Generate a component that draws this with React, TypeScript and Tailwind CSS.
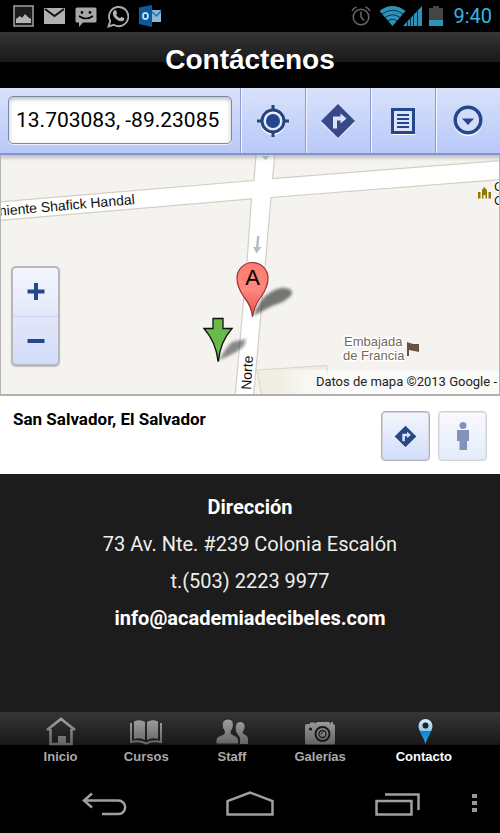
import type { ReactNode } from "react";

const roboto = "font-[Roboto,sans-serif]";
const helvetica = "font-['Liberation_Sans',Arial,sans-serif]";

function StatusBar() {
  return (
    <header className={`flex h-8 items-center justify-between bg-black pl-[13px] pr-2 ${roboto}`}>
      <div className="flex items-center gap-[10px]">
        <svg width="21" height="22" viewBox="0 0 21 22">
          <rect x="1" y="1" width="19" height="20" fill="#1c1c1c" stroke="#989898" strokeWidth="1.6" />
          <path d="M3 18v-4l4-3 2 2 3-4 3 3 3 2v4z" fill="#b4b4b4" />
        </svg>
        <svg width="21" height="22" viewBox="0 0 21 22">
          <rect y="3" width="21" height="16" fill="#b0b0b0" />
          <path d="M1 4l9.500 7L20 4" fill="none" stroke="#111" strokeWidth="2" />
        </svg>
        <svg width="22" height="22" viewBox="0 0 22 22">
          <path d="M2 2.500h18q1.500 0 1.500 1.500v12q0 1.500-1.500 1.500H8L4 22v-4.500H2Q.500 17.500.500 16V4Q.500 2.500 2 2.500z" fill="#a8a8a8" />
          <circle cx="7" cy="7.500" r="1.400" fill="#000" />
          <circle cx="15" cy="7.500" r="1.400" fill="#000" />
          <path d="M4 11q7 5 14 0" fill="none" stroke="#000" strokeWidth="1.600" />
        </svg>
        <svg width="22" height="24" viewBox="0 0 22 24">
          <path d="M1.500 22.500l1.700-5.500a9.600 9.600 0 1 1 3.600 3.800z" fill="none" stroke="#aaa" strokeWidth="1.900" />
          <path d="M7.200 6.500q1-.900 1.800 0l1.200 2.600-1.100 1.600q1.400 2.600 4 3.600l1.400-1.600 2.800 1.500q.300 2.600-2.800 3c-4.500 0-8.900-4.600-8.700-8.200q.200-1.600 1.400-2.500z" fill="#b4b4b4" />
        </svg>
        <svg width="23" height="22" viewBox="0 0 23 22">
          <rect x="11" y="5" width="11" height="12" fill="#8fb6d4" />
          <path d="M12 6l5.500 5L22 6" fill="none" stroke="#1671b4" strokeWidth="1.300" />
          <path d="M0 2.500L13 0v22L0 19z" fill="#0a5a9e" />
          <ellipse cx="6.500" cy="11" rx="2.500" ry="3.200" fill="none" stroke="#c6dcec" strokeWidth="1.800" />
        </svg>
      </div>
      <div className="flex items-center">
        <svg width="20" height="20" viewBox="0 0 20 20" fill="none" stroke="#686868" strokeWidth="1.500">
          <circle cx="10" cy="11" r="7.800" />
          <path d="M10 5.500V11l3 3.500M1 5Q2.500 2 5.500 1M14.500 1Q17.500 2 19 5" />
        </svg>
        <svg className="ml-2" width="44" height="22" viewBox="0 0 44 22">
          <path d="M0.500 6Q13.500-4 26.500 6L13.500 21z" fill="#2e93ba" />
          <g fill="none" stroke="#041620" strokeWidth=".8">
            <path d="M3 9Q13.500 1.500 24 9" />
            <path d="M6 12.500Q13.500 7 21 12.500" />
            <path d="M9 16Q13.500 12.500 18 16" />
          </g>
          <path d="M24 21L43 1V21z" fill="#2e93ba" />
          <path d="M28.500 17V21M31.500 13V21M34.500 10V21M38.500 6V21" stroke="#0b2a37" strokeWidth="1" />
        </svg>
        <svg className="ml-[6px]" width="14" height="22" viewBox="0 0 14 22">
          <path d="M4 1h6v2h4v18H0V3h4z" fill="#454545" />
          <path d="M0 15h14v6H0z" fill="#2e93ba" />
        </svg>
        <time className="ml-[10px] text-[20px] leading-6 text-[#33b5e5]">9:40</time>
      </div>
    </header>
  );
}

function TurnSign({ size, color }: { size: number; color: string }) {
  return (
    <svg width={size} height={size} viewBox="0 0 36 36">
      <path d="M18 2.500L35 19.500 18 36 1 19.500z" fill="#fff" opacity=".8" />
      <path d="M18 1L35 18 18 35 1 18z" fill={color} />
      <path d="M13 25.500V13.500h7.500V10.500l6 5-6 5v-3H17v8z" fill="#dce3f8" />
    </svg>
  );
}

function ToolButton({ label, children }: { label: string; children: ReactNode }) {
  return (
    <button
      aria-label={label}
      className="flex w-[65px] items-center justify-center border-l border-[#8b9dcc] shadow-[inset_1px_0_0_#f2f5ff]"
    >
      {children}
    </button>
  );
}

function Toolbar() {
  return (
    <div className="flex h-[67px] border-b-2 border-[#8296cb] bg-linear-to-b from-[#d9e2fb] to-[#b8c8f8]">
      <div className="min-w-0 flex-1 p-2">
        <input
          aria-label="Buscar en el mapa"
          defaultValue="13.703083, -89.230857"
          className={`block h-12 w-full rounded-[5px] border border-[#7c88a8] bg-white pl-[7px] pr-[11px] text-[21px] text-black shadow-[inset_0_2px_4px_#b8b8b8,0_1px_0_#eef2ff] outline-none ${roboto}`}
        />
      </div>
      <ToolButton label="Mi ubicación">
        <svg width="32" height="32" viewBox="0 0 32 32" fill="none">
          <circle cx="16" cy="17.500" r="11" stroke="#fff" strokeWidth="3" />
          <path d="M16 0v6M16 26v6M0 16h6M26 16h6" stroke="#27447f" strokeWidth="3" />
          <circle cx="16" cy="16" r="11" stroke="#27447f" strokeWidth="3" />
          <circle cx="16" cy="16" r="8" stroke="#e7edff" strokeWidth="2" />
          <circle cx="16" cy="16" r="7" fill="#24478d" />
        </svg>
      </ToolButton>
      <ToolButton label="Indicaciones">
        <TurnSign size={36} color="#38498a" />
      </ToolButton>
      <ToolButton label="Lista">
        <svg width="26" height="28" viewBox="0 0 26 28">
          <path d="M1 27.500h24" stroke="#fff" />
          <rect x="2.500" y="2.500" width="21" height="23" fill="#dce4fb" stroke="#24478d" strokeWidth="3" />
          <path d="M7 8h12M7 12h12M7 16h12M7 20h12" stroke="#24478d" strokeWidth="2" />
        </svg>
      </ToolButton>
      <ToolButton label="Más opciones">
        <svg width="30" height="31" viewBox="0 0 30 31">
          <circle cx="15" cy="16.500" r="13" fill="none" stroke="#fff" strokeWidth="3" />
          <circle cx="15" cy="15" r="12.800" fill="#d3ddfa" stroke="#24478d" strokeWidth="3.500" />
          <path d="M9 13.500h12L15 20z" fill="#24478d" />
        </svg>
      </ToolButton>
    </div>
  );
}

function MapView() {
  return (
    <section aria-label="Mapa" className="relative h-[241px] overflow-hidden border-b-2 border-[#b0b0b0] bg-[#f4f3ef]">
      <svg className="block h-[241px] w-full" viewBox="0 155 500 241" preserveAspectRatio="xMidYMid slice">
        <defs>
          <filter id="soft" x="-30%" y="-30%" width="160%" height="160%">
            <feGaussianBlur stdDeviation="1.500" />
          </filter>
          <linearGradient id="pin" x1="0" y1="0" x2="0" y2="1">
            <stop offset="0" stopColor="#ff7a70" />
            <stop offset=".5" stopColor="#ff8880" />
            <stop offset="1" stopColor="#e84a45" />
          </linearGradient>
          <linearGradient id="edge" x1="0" y1="0" x2="0" y2="1">
            <stop offset="0" stopColor="#8a8a8a" stopOpacity=".5" />
            <stop offset="1" stopColor="#8a8a8a" stopOpacity="0" />
          </linearGradient>
        </defs>
        <path d="M257 370L327 365.500 330 397H262z" fill="#f0ede3" stroke="#d9d4c4" />
        <path
          d="M-1 202L254 180.500 256 154H275L272.500 178.500 501 160.500V179.500L271 197.500 265.500 262 253.500 397H235L247 262 251.500 199 -1 220.500z"
          fill="#fff"
          stroke="#d3cfc2"
          strokeWidth="1.200"
        />
        <g fill="#b6c0c4">
          <path d="M257 236h2.500l-1 11h3l-5 6.500-3.500-6.500h3z" />
          <path d="M261.500 156h8l-4 4z" />
        </g>
        <g className={helvetica}>
          <text transform="translate(135 204) rotate(-5)" textAnchor="end" fontSize="14" fill="#111">
            Poniente Shafick Handal
          </text>
          <text transform="translate(251 390) rotate(-87)" fontSize="14" fill="#111">Norte</text>
          <g fontSize="13" stroke="#fff" strokeWidth="3" strokeLinejoin="round" style={{ paintOrder: "stroke" }}>
            <g fill="#796a56">
              <text x="344" y="346">Embajada</text>
              <text x="343" y="360">de Francia</text>
            </g>
            <g fill="#222">
              <text x="494" y="191">C</text>
              <text x="494" y="205">C</text>
            </g>
          </g>
        </g>
        <path d="M407 342l6 2h6v8l-5-1-5-1v6h-2z" fill="#655443" />
        <path d="M478 192h2.500v6.500H478zM488.500 192h2.500v6.500h-2.500zM482 198.500V190l2-3 3 3v8.500h-1.500V195h-2v3.500z" fill="#917800" />
        <path d="M253 316Q262 292 281 288 293 287 292 294 288 301 272 306z" fill="#333" opacity=".65" filter="url(#soft)" />
        <path d="M219 360Q227 346 232 342L246 339 244 346Q235 354 219 360z" fill="#333" opacity=".55" filter="url(#soft)" />
        <path
          d="M252.500 317Q251.500 306 244 297 237 287 237 278A15.500 15.500 0 0 1 268 278Q268 287 261 297 254 306 252.500 317z"
          fill="url(#pin)"
          stroke="#96322f"
          strokeWidth="1.200"
        />
        <text x="252.500" y="285" textAnchor="middle" fontSize="22" fill="#000" className={helvetica}>A</text>
        <path d="M213 318.500H223V328.500H232Q220 342 218.500 361H218Q216 342 204 328.500H213z" fill="#67bb49" stroke="#111" strokeWidth="1.300" />
        <rect y="155" width="500" height="6" fill="url(#edge)" />
        <path d="M.5 155V396M499.500 155V396" stroke="#b5b5b5" />
      </svg>
      <div className="absolute left-[11px] top-[111px] flex h-[100px] w-[49px] flex-col rounded-[5px] border-2 border-[#b7b8bd] bg-linear-to-b from-[#f5f7fd] via-[#e3e8f9] to-[#d2dcf9] shadow-[0_1px_1px_#bbb]">
        <button aria-label="Acercar" className="flex flex-1 items-center justify-center border-b border-[#cbd5f3]">
          <svg width="18" height="18" viewBox="0 0 18 18">
            <path d="M9 0v17M0.500 8.500h17" stroke="#27478c" strokeWidth="4" />
          </svg>
        </button>
        <button aria-label="Alejar" className="flex flex-1 items-center justify-center">
          <svg width="18" height="18" viewBox="0 0 18 18">
            <path d="M0.500 10h17" stroke="#27478c" strokeWidth="4" />
          </svg>
        </button>
      </div>
      <p className={`absolute bottom-0 right-px whitespace-nowrap bg-linear-to-r from-white/0 via-white/60 via-15% to-white/60 pl-10 pr-[2px] text-[13px] leading-6 text-[#222] ${roboto}`}>
        Datos de mapa ©2013 Google -
      </p>
    </section>
  );
}

function PlaceBar() {
  return (
    <section className="flex h-[78px] items-start justify-between bg-white pl-[13px] pr-[13px]">
      <h2 className={`mt-[11px] text-[17px] font-bold leading-6 text-black ${roboto}`}>San Salvador, El Salvador</h2>
      <div className="mt-[15px] flex gap-2">
        <button
          aria-label="Cómo llegar"
          className="flex h-[50px] w-[49px] items-center justify-center rounded-[4px] border border-[#aeb0b6] bg-linear-to-b from-[#f4f6fc] to-[#d2ddfa] shadow-[inset_0_0_0_1px_#d0d3dc]"
        >
          <TurnSign size={23} color="#284887" />
        </button>
        <button
          aria-label="Street View"
          className="flex h-[50px] w-[49px] items-center justify-center rounded-[4px] border border-[#d0d1d5] bg-linear-to-b from-[#f9fafd] to-[#e5ebfb] shadow-[inset_0_0_0_1px_#e3e5ea]"
        >
          <svg width="14" height="30" viewBox="0 0 14 30" fill="#8292bd">
            <circle cx="7" cy="4.500" r="3.500" />
            <path d="M1 9h12v11h-2v9H3.500v-9H1z" />
          </svg>
        </button>
      </div>
    </section>
  );
}

function Address() {
  return (
    <address className={`flex-1 bg-[#1c1c1c] pt-[15px] text-center text-[20px] not-italic leading-[37px] text-[#eee] ${roboto}`}>
      <h2 className="font-bold text-white">Dirección</h2>
      <p>73 Av. Nte. #239 Colonia Escalón</p>
      <p>t.(503) 2223 9977</p>
      <a href="mailto:info@academiadecibeles.com" className="font-bold text-white">info@academiadecibeles.com</a>
    </address>
  );
}

function Tab({ label, active, children }: { label: string; active?: boolean; children: ReactNode }) {
  return (
    <a
      href="#"
      aria-current={active ? "page" : undefined}
      className={`flex flex-col items-center text-[13px] font-bold leading-4 ${active ? "text-white" : "text-[#aaa]"}`}
    >
      <svg className="mt-1 mb-[3px]" width="34" height="30" viewBox="0 0 34 30">{children}</svg>
      {label}
    </a>
  );
}

function TabBar() {
  return (
    <nav
      className={`grid h-[58px] grid-cols-[85fr_86fr_85fr_91fr_116fr] bg-linear-to-b from-[#363636] via-[#181818] via-57% to-black to-57% px-[18px] ${helvetica}`}
    >
      <Tab label="Inicio">
        <defs>
          <linearGradient id="metal" gradientUnits="userSpaceOnUse" x1="0" y1="2" x2="0" y2="29">
            <stop offset="0" stopColor="#a2a2a2" />
            <stop offset="1" stopColor="#626262" />
          </linearGradient>
        </defs>
        <path d="M3 14L17 3 31 14M6.500 13V28H27.500V13" fill="none" stroke="url(#metal)" strokeWidth="2.600" />
        <path d="M14 20h8v8h-8z" fill="url(#metal)" />
      </Tab>
      <Tab label="Cursos">
        <path d="M5 5.500Q11 3 16 6V24Q11 21 5 23zM29 5.500Q23 3 18 6V24Q23 21 29 23z" fill="url(#metal)" />
        <path d="M2 7V26Q10 24 17 27.500 24 24 32 26V7" fill="none" stroke="url(#metal)" strokeWidth="2" />
      </Tab>
      <Tab label="Staff">
        <path d="M25 6c3.500 0 5 2.500 4.500 6-.5 2.500-2 4-2 5s5.500 2 5.500 6v5H25V22l-3-5c-2-3-2-11 3-11z" fill="url(#metal)" />
        <path
          d="M13 3c5 0 6 4 5 8.500-.5 2-2 3-2 5.500 0 2 7.500 2.500 7.500 7.500V28H1V24.500C1 19.500 9.500 19 9.500 17c0-2.500-1.500-3.500-2-5.500C6.500 7 8 3 13 3z"
          fill="url(#metal)"
          stroke="#222"
          strokeWidth="1"
        />
      </Tab>
      <Tab label="Galerías">
        <path d="M4 8H7V6.500H12V8l2-2h12l2 2V6h2v2q2 0 2 2V27q0 1.500-1.500 1.500h-27Q2 28.500 2 27V10q0-2 2-2z" fill="url(#metal)" />
        <circle cx="7.500" cy="13" r="1.600" fill="#181818" />
        <circle cx="19.500" cy="18" r="7" fill="none" stroke="#181818" strokeWidth="2" />
        <circle cx="19.500" cy="18" r="3.500" fill="none" stroke="#181818" strokeWidth="1.300" />
        <path d="M18 18.500q.500-2 2-2" fill="none" stroke="#222" />
      </Tab>
      <Tab label="Contacto" active>
        <defs>
          <linearGradient id="place" x1="0" y1="0" x2="0" y2="1">
            <stop offset="0" stopColor="#d9effb" />
            <stop offset=".5" stopColor="#86c6ed" />
            <stop offset=".5" stopColor="#1186cc" />
            <stop offset="1" stopColor="#2aa3e4" />
          </linearGradient>
        </defs>
        <path d="M18.500 3a7 7 0 0 1 7 7c0 5-5.500 12-7 18-1.500-6-7-13-7-18a7 7 0 0 1 7-7z" fill="url(#place)" />
        <circle cx="18.500" cy="9.500" r="3" fill="#202020" />
      </Tab>
    </nav>
  );
}

function SystemBar() {
  return (
    <footer className="flex h-[63px] items-center justify-between bg-black pl-[81px] pr-[20px] pt-1">
      <button aria-label="Atrás">
        <svg width="46" height="26" viewBox="0 0 46 26" fill="none" stroke="#a0a0a0" strokeWidth="2.500">
          <path d="M21 23H37.500a6.700 6.700 0 0 0 0-13.400H4M11 2.500L3 9.600 11 16.500" />
        </svg>
      </button>
      <button aria-label="Inicio del sistema">
        <svg width="50" height="28" viewBox="0 0 50 28" fill="none" stroke="#a0a0a0" strokeWidth="2.500">
          <path d="M2.500 24.500V11L25 2.500 47.500 11V24.500z" />
        </svg>
      </button>
      <div className="flex items-center gap-12">
        <button aria-label="Aplicaciones recientes">
          <svg width="48" height="26" viewBox="0 0 48 26" fill="none" stroke="#a0a0a0" strokeWidth="2.500">
            <path d="M3.500 10H38.500V23.500H3.500z" />
            <path d="M12 3.500H45.500V19" />
          </svg>
        </button>
        <button aria-label="Menú">
          <svg width="11" height="22" viewBox="0 0 11 22" fill="#999">
            <path d="M3 1h5v4H3zM3 8h5v4H3zM3 15h5v4H3z" />
          </svg>
        </button>
      </div>
    </footer>
  );
}

export default function App() {
  return (
    <div className="flex min-h-screen flex-col bg-black">
      <StatusBar />
      <h1
        className={`flex h-14 items-center justify-center bg-linear-to-b from-[#363636] via-[#181818] via-54% to-black to-54% text-[28px] font-bold leading-8 text-white ${helvetica}`}
      >
        Contáctenos
      </h1>
      <Toolbar />
      <MapView />
      <PlaceBar />
      <Address />
      <TabBar />
      <SystemBar />
    </div>
  );
}
